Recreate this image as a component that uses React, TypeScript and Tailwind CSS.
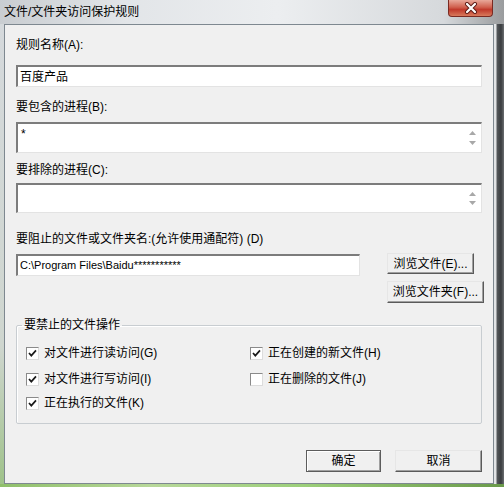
import React from "react";

const font = { fontFamily: '"Liberation Sans", "Noto Sans CJK SC", sans-serif' };

function Sunken({ className = "", children }: { className?: string; children?: React.ReactNode }) {
  return (
    <div
      className={`relative bg-white border-t-2 border-l-2 border-b border-r border-t-[#7c7c7c] border-l-[#7c7c7c] border-b-[#e3e3e3] border-r-[#e3e3e3] ${className}`}
    >
      {children}
    </div>
  );
}

function ScrollArrows() {
  return (
    <div className="absolute right-0 top-0 bottom-0 w-[17px] flex flex-col justify-between items-center py-[6px]">
      <svg width="9" height="6" viewBox="0 0 9 6">
        <path d="M4.5 1 L8 5 L1 5 Z" fill="#a8a8a8" />
      </svg>
      <svg width="9" height="6" viewBox="0 0 9 6">
        <path d="M1 1 L8 1 L4.5 5 Z" fill="#a8a8a8" />
      </svg>
    </div>
  );
}

function Btn({ w, h, label, def = false, className = "" }: { w: string; h: string; label: string; def?: boolean; className?: string }) {
  return (
    <div
      className={`${w} ${h} shrink-0 flex items-center justify-center text-[12px] text-black bg-[#f0f0f0] border ${
        def
          ? "border-[#5c5c5c] shadow-[inset_1px_1px_0_#ffffff,inset_-1px_-1px_0_#a0a0a0]"
          : "border-t-[#e6e6e6] border-l-[#e6e6e6] border-b-[#5a5a5a] border-r-[#5a5a5a] shadow-[inset_-1px_-1px_0_#a0a0a0]"
      } ${className}`}
    >
      {label}
    </div>
  );
}

function Check({ checked, label }: { checked: boolean; label: string }) {
  return (
    <div className="flex items-center h-[16px]">
      <div className="w-[13px] h-[13px] bg-white border border-t-[#8a8a8a] border-l-[#8a8a8a] border-b-[#dcdcdc] border-r-[#dcdcdc] flex items-center justify-center">
        {checked && (
          <svg width="11" height="11" viewBox="0 0 11 11">
            <path d="M2 5 L4.3 7.6 L9 2.4" fill="none" stroke="#1a1a1a" strokeWidth="1.7" />
          </svg>
        )}
      </div>
      <span className="ml-[5px] text-[12px] leading-[16px] text-black">{label}</span>
    </div>
  );
}

export default function App() {
  return (
    <div className="w-[504px] h-[487px] overflow-hidden flex flex-col bg-[#d9dde0]" style={font}>
      {/* title bar */}
      <div className="h-[24px] flex items-start relative bg-[linear-gradient(to_right,#c9cdd1,#e2e5e8_25%,#eceef0_55%,#d6d9dc_88%,#9a9c9e)]">
        <span className="ml-[4px] mt-[4px] text-[12px] leading-[16px] text-black">文件/文件夹访问保护规则</span>
        <div className="absolute left-[448px] top-0 w-[45px] h-[17px] rounded-b-[4px] border border-t-0 border-[#7a2a22] bg-[linear-gradient(to_bottom,#e8a89a,#d0604e_45%,#c0392b_60%,#d87a5c)] flex items-center justify-center">
          <svg width="16" height="12" viewBox="0 0 16 12">
            <path d="M4 2 L12 10 M12 2 L4 10" stroke="#5a1a14" strokeWidth="4" strokeLinecap="round" />
            <path d="M4 2 L12 10 M12 2 L4 10" stroke="#ffffff" strokeWidth="2.2" strokeLinecap="round" />
          </svg>
        </div>
      </div>
      {/* middle */}
      <div className="flex h-[460px]">
        <div className="w-[4px] bg-[linear-gradient(to_bottom,#d5d9dc,#cfd6cf_70%,#9fc28a)]" />
        <div className="w-[490px] h-[460px] bg-[#f0f0f0] border border-[#7e8890] flex flex-col px-[11px]">
          <div className="mt-[12px] text-[12px] leading-[16px] text-black">规则名称(A):</div>
          <Sunken className="mt-[12px] h-[22px] flex items-center pl-[2px]">
            <span className="text-[12px] text-black">百度产品</span>
          </Sunken>

          <div className="mt-[12px] text-[12px] leading-[16px] text-black">要包含的进程(B):</div>
          <Sunken className="mt-[7px] h-[31px]">
            <span className="absolute left-[3px] top-[1px] text-[12px] text-black">*</span>
            <ScrollArrows />
          </Sunken>

          <div className="mt-[9px] text-[12px] leading-[16px] text-black">要排除的进程(C):</div>
          <Sunken className="mt-[5px] h-[30px]">
            <ScrollArrows />
          </Sunken>

          <div className="mt-[18px] text-[12px] leading-[16px] text-black">要阻止的文件或文件夹名:(允许使用通配符) (D)</div>
          <div className="mt-[6px] flex items-start">
            <Sunken className="mt-[1px] w-[344px] shrink-0 h-[22px] flex items-center pl-[2px]">
              <span className="text-[11px] text-black">C:\Program Files\Baidu***********</span>
            </Sunken>
            <div className="ml-[27px] flex flex-col items-start">
              <Btn w="w-[87px]" h="h-[21px]" label="浏览文件(E)..." />
              <Btn w="w-[97px]" h="h-[22px]" label="浏览文件夹(F)..." className="mt-[7px]" />
            </div>
          </div>

          <fieldset className="mt-[16px] border border-[#c8cdd1] rounded-[2px] shadow-[inset_1px_1px_0_#ffffff]">
            <legend className="ml-[5px] px-[2px] text-[12px] leading-[12px] text-black">要禁止的文件操作</legend>
            <div className="flex pl-[9px] pt-[14px] pb-[12px]">
              <div className="w-[224px] flex flex-col">
                <Check checked label="对文件进行读访问(G)" />
                <div className="mt-[10px]"><Check checked label="对文件进行写访问(I)" /></div>
                <div className="mt-[8px]"><Check checked label="正在执行的文件(K)" /></div>
              </div>
              <div className="flex flex-col">
                <Check checked label="正在创建的新文件(H)" />
                <div className="mt-[10px]"><Check checked={false} label="正在删除的文件(J)" /></div>
              </div>
            </div>
          </fieldset>

          <div className="mt-[26px] flex justify-end gap-[14px]">
            <Btn w="w-[75px]" h="h-[22px]" label="确定" def />
            <Btn w="w-[87px]" h="h-[22px]" label="取消" />
          </div>
        </div>
        <div className="w-[10px] bg-[linear-gradient(to_right,#e2e4e6_0%,#e2e4e6_20%,#55585b_30%,#3a3d40_70%,#6a6d70)]" />
      </div>
      <div className="h-[3px] bg-[linear-gradient(to_right,#8fbf6a,#b8d89a_30%,#9ccf7a_60%,#6a9a4a)]" />
    </div>
  );
}
